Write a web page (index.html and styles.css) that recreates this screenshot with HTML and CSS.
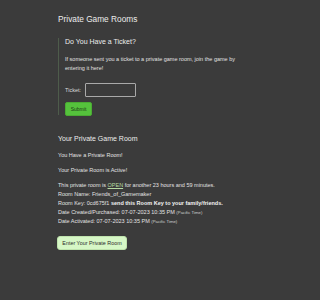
FILE: index.html
```html
<!DOCTYPE html>
<html lang="en">
<head>
<meta charset="utf-8">
<title>Private Game Rooms</title>
<link rel="stylesheet" href="styles.css">
</head>
<body>
<main class="page">
  <h1 class="title">Private Game Rooms</h1>
  <section class="ticket-box">
    <h3 class="sub-title">Do You Have a Ticket?</h3>
    <p class="text">If someone sent you a ticket to a private game room, join the game by entering it here!</p>
    <form class="ticket-form">
      <div class="ticket-row">
        <label class="ticket-label" for="ticket">Ticket:</label>
        <input class="ticket-input" id="ticket" type="text">
      </div>
      <button class="submit-btn" type="button">Submit</button>
    </form>
  </section>
  <h2 class="section-title">Your Private Game Room</h2>
  <p class="text">You Have a Private Room!</p>
  <p class="text">Your Private Room is Active!</p>
  <p class="text details">This private room is <a class="open-link" href="#">OPEN</a> for another 23 hours and 59 minutes.<br>
  Room Name: Friends_of_Gamemaker<br>
  Room Key: 0cd675f1 <strong class="strong">send this Room Key to your family/friends.</strong><br>
  Date Created/Purchased: 07-07-2023 10:35 PM <span class="tz">(Pacific Time)</span><br>
  Date Activated: 07-07-2023 10:35 PM <span class="tz">(Pacific Time)</span></p>
  <button class="enter-btn" type="button">Enter Your Private Room</button>
</main>
</body>
</html>
```

FILE: styles.css
```css
html, body {
  margin: 0;
  padding: 0;
  background: #3b3b3b;
}
body {
  font-family: "Liberation Sans", Arial, sans-serif;
  color: #e2e2e2;
}
.page {
  width: 184px;
  margin: 0 0 0 58px;
  padding-top: 14px;
}
.title {
  font-size: 8.3px;
  line-height: 10px;
  font-weight: normal;
  margin: 0 0 14px;
  color: #ececec;
}
.ticket-box {
  border-left: 1px solid #4e5c4b;
  padding-left: 6px;
  padding-bottom: 0;
  height: 77px;
  box-sizing: border-box;
}
.sub-title {
  font-size: 7px;
  line-height: 8px;
  font-weight: normal;
  margin: 0 0 9.4px;
  color: #ececec;
}
.text {
  font-size: 5.5px;
  line-height: 9px;
  margin: 0 0 5.8px;
}
.ticket-box .text {
  margin: 0 0 9.6px;
}
.ticket-form {
  display: flex;
  flex-direction: column;
  align-items: flex-start;
  gap: 5.3px;
  margin: 0;
}
.ticket-row {
  display: flex;
  align-items: center;
  gap: 4px;
}
.ticket-label {
  font-size: 5.5px;
  color: #dcdcdc;
}
.ticket-input {
  width: 51px;
  height: 14px;
  box-sizing: border-box;
  margin: 0;
  padding: 0 2px;
  background: #3b3b3b;
  border: 1px solid #a9a9a9;
  border-radius: 1px;
  color: #eee;
  font-size: 5.5px;
}
.submit-btn {
  width: 27px;
  height: 13.4px;
  padding: 0;
  margin: 0;
  background: #55c23c;
  border: 1px solid #4aab33;
  border-radius: 2px;
  color: #1d3a16;
  font-family: "Liberation Sans", Arial, sans-serif;
  font-size: 5px;
}
.section-title {
  font-size: 7px;
  line-height: 8px;
  font-weight: normal;
  margin: 20px 0 8.3px;
  color: #ececec;
}
.details {
  margin-bottom: 10px;
}
.open-link {
  color: #b5d9a2;
  text-decoration: underline;
}
.strong {
  font-weight: bold;
  color: #f2f2f2;
}
.tz {
  font-size: 4.3px;
  color: #cfcfcf;
}
.enter-btn {
  display: block;
  width: 70px;
  height: 14.5px;
  padding: 0;
  margin: 0 0 0 -1px;
  background: #d6f7c6;
  border: 1px solid #bfe3ad;
  border-radius: 3px;
  color: #2c2c2c;
  font-family: "Liberation Sans", Arial, sans-serif;
  font-size: 5.4px;
}
```
